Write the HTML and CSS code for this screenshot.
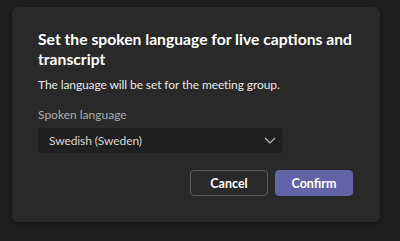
FILE: index.html
```html
<!DOCTYPE html>
<html lang="en">
<head>
<meta charset="utf-8">
<link rel="stylesheet" href="styles.css">
</head>
<body>
<div class="dialog">
  <h1 class="title">Set the spoken language for live captions and transcript</h1>
  <p class="desc">The language will be set for the meeting group.</p>
  <label class="label">Spoken language</label>
  <div class="select">
    <span class="select-text">Swedish (Sweden)</span>
    <svg class="chev" width="12" height="7" viewBox="0 0 12 7"><path d="M1 1 L6 6 L11 1" fill="none" stroke="#bdbdbd" stroke-width="1.2"/></svg>
  </div>
  <div class="actions">
    <button class="btn btn-secondary">Cancel</button>
    <button class="btn btn-primary">Confirm</button>
  </div>
</div>
</body>
</html>
```

FILE: styles.css
```css
* { box-sizing: border-box; }
html, body { margin: 0; padding: 0; }
body {
  background: #1f1f1f;
  width: 400px;
  height: 241px;
  overflow: hidden;
  font-family: Lato, "Open Sans", sans-serif;
  color: #ffffff;
}
.dialog {
  margin: 7px 0 0 12px;
  width: 368px;
  height: 215px;
  background: #292929;
  border-radius: 6px;
  box-shadow: 0 2px 6px rgba(0,0,0,0.35);
  padding: 22px 27px 26px 26px;
  display: flex;
  flex-direction: column;
}
.title {
  margin: 0;
  font-size: 15.7px;
  line-height: 20px;
  font-weight: 700;
  color: #ffffff;
}
.desc {
  margin: 6px 0 0;
  font-size: 12px;
  letter-spacing: -0.1px;
  line-height: 20px;
  color: #e8e8e8;
}
.label {
  margin-top: 10px;
  font-size: 12px;
  line-height: 20px;
  color: #adadad;
}
.select {
  margin-top: 3px;
  width: 245px;
  height: 25px;
  flex: none;
  background: #1f1f1f;
  border-radius: 4px;
  display: flex;
  align-items: center;
  justify-content: space-between;
  padding: 0 7px 0 11px;
}
.select-text {
  font-size: 12px;
  letter-spacing: -0.1px;
  line-height: 20px;
  color: #d6d6d6;
}
.chev { display: block; }
.actions {
  margin-top: 17px;
  display: flex;
  justify-content: flex-end;
  gap: 7px;
}
.btn {
  width: 78px;
  height: 26px;
  border-radius: 4px;
  font-family: inherit;
  font-size: 12.5px;
  font-weight: 700;
  color: #ffffff;
  padding: 0;
  cursor: pointer;
}
.btn-secondary {
  background: #292929;
  border: 1px solid #5c5c5c;
}
.btn-primary {
  background: #6264a7;
  border: 1px solid #6264a7;
}
```
